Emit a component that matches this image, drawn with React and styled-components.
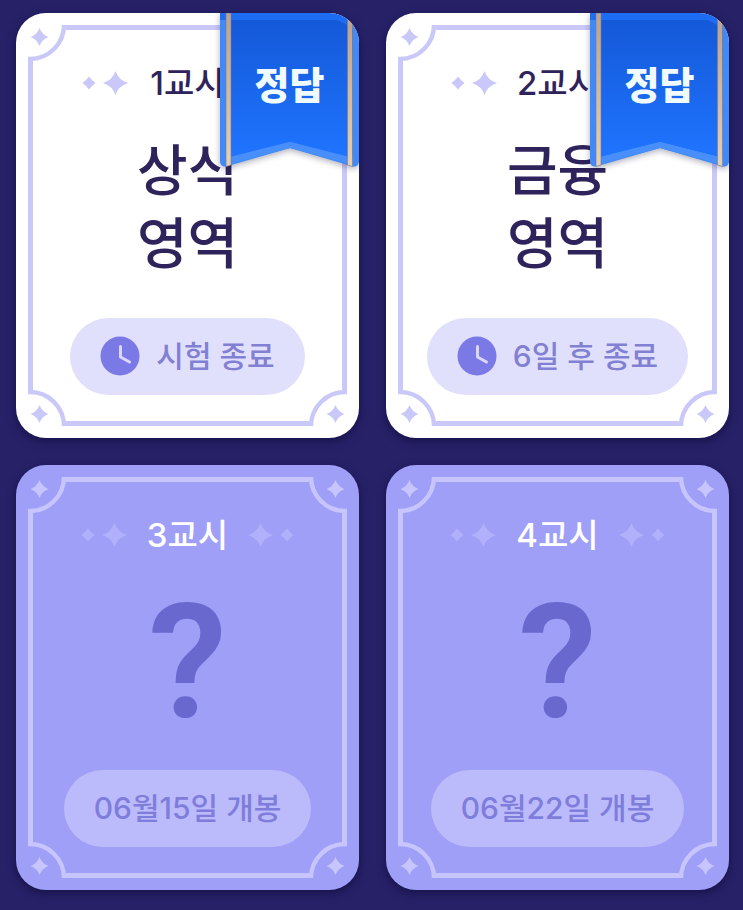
import React from "react";
import styled, { createGlobalStyle, css } from "styled-components";

const GlobalStyle = createGlobalStyle`
  *, *::before, *::after { box-sizing: border-box; }
  body {
    margin: 0;
    background: #272168;
    font-family: Inter, "Noto Sans CJK KR", sans-serif;
  }
`;

const themes = {
  open: {
    background: "#ffffff",
    frame: "#cac8f8",
    sparkle: "#cac8fb",
    period: "#2f235c",
    pill: "#e1e0fc",
    pillText: "#8180d3",
  },
  locked: {
    background: "#9f9ff7",
    frame: "#c6c5fe",
    sparkle: "#b1b0fa",
    period: "#ffffff",
    pill: "#bbbafb",
    pillText: "#7f7ddb",
  },
};

const Board = styled.ul`
  list-style: none;
  margin: 0;
  padding: 13px 14px 20px 16px;
  display: grid;
  grid-template-columns: repeat(2, minmax(0, 1fr));
  gap: 27px;
`;

const Card = styled.li`
  position: relative;
  overflow: hidden;
  display: flex;
  flex-direction: column;
  align-items: center;
  padding: 49px 12px 43px;
  border-radius: 30px;
  background: ${({ $tone }) => themes[$tone].background};
  box-shadow: 0 3px 8px rgba(12, 8, 50, 0.6);
`;

const FrameGrid = styled.div`
  position: absolute;
  inset: 12px;
  display: grid;
  grid-template-columns: 38px 1fr 38px;
  grid-template-rows: 36px 1fr 36px;
  color: ${({ $tone }) => themes[$tone].frame};
  pointer-events: none;
`;

const FrameEdge = styled.span`
  ${({ $side }) => css`border-${$side}: 5px solid currentColor;`}
`;

const flips = {
  topLeft: "none",
  topRight: "scaleX(-1)",
  bottomLeft: "scaleY(-1)",
  bottomRight: "scale(-1, -1)",
};

const CornerSvg = styled.svg`
  display: block;
  width: 38px;
  height: 36px;
  overflow: visible;
  transform: ${({ $place }) => flips[$place]};
`;

const Header = styled.header`
  display: flex;
  align-items: center;
  justify-content: center;
  gap: 20px;
`;

const Period = styled.h2`
  margin: 0;
  min-width: 80px;
  text-align: center;
  font-size: 33px;
  line-height: 42px;
  font-weight: 500;
  white-space: nowrap;
  color: ${({ $tone }) => themes[$tone].period};
`;

const SparkleSvg = styled.svg`
  display: block;
  width: 46px;
  height: 26px;
  fill: ${({ $tone }) => themes[$tone].sparkle};
  transform: ${({ $mirrored }) => ($mirrored ? "scaleX(-1)" : "none")};
`;

const Subject = styled.p`
  margin: 30px 0 38px;
  text-align: center;
  white-space: pre-line;
  font-size: 55px;
  line-height: 73px;
  font-weight: 500;
  color: #2f235c;
`;

const Unknown = styled.p`
  margin: 34px 0;
  font-family: Roboto, sans-serif;
  font-size: 160px;
  line-height: 146px;
  font-weight: 600;
  color: #6968cf;
`;

const Pill = styled.div`
  display: flex;
  align-items: center;
  gap: 16px;
  height: 77px;
  padding: 0 30px 2px;
  border-radius: 39px;
  font-size: 30px;
  line-height: 40px;
  font-weight: 500;
  white-space: nowrap;
  background: ${({ $tone }) => themes[$tone].pill};
  color: ${({ $tone }) => themes[$tone].pillText};
`;

const ClockSvg = styled.svg`
  display: block;
  flex: none;
  width: 40px;
  height: 40px;
`;

const RibbonButton = styled.button`
  position: absolute;
  top: 0;
  right: 0;
  width: 139px;
  height: 155px;
  padding: 0 0 16px;
  border: 0;
  background: none;
  color: #f0fbff;
  font: 900 38px/40px "Noto Sans CJK KR", sans-serif;
  cursor: pointer;
`;

const RibbonSvg = styled.svg`
  position: absolute;
  inset: 0;
  width: 100%;
  height: 100%;
  overflow: visible;
  filter: drop-shadow(0 2px 3px rgba(20, 20, 60, 0.35));
`;

const RibbonLabel = styled.span`
  position: relative;
`;

function Corner({ place }) {
  return (
    <CornerSvg $place={place} viewBox="0 0 38 36" aria-hidden="true">
      <path d="M0 34H2A34 34 0 0 0 36 0" fill="none" stroke="currentColor" strokeWidth="4.4" />
      <path d="M11.500 3Q14 9.500 20.500 12Q14 14.500 11.500 21Q9 14.500 2.500 12Q9 9.500 11.500 3Z" fill="currentColor" />
    </CornerSvg>
  );
}

function Frame({ tone }) {
  return (
    <FrameGrid $tone={tone} aria-hidden="true">
      <Corner place="topLeft" />
      <FrameEdge $side="top" />
      <Corner place="topRight" />
      <FrameEdge $side="left" />
      <span />
      <FrameEdge $side="right" />
      <Corner place="bottomLeft" />
      <FrameEdge $side="bottom" />
      <Corner place="bottomRight" />
    </FrameGrid>
  );
}

function Sparkles({ tone, mirrored }) {
  return (
    <SparkleSvg $tone={tone} $mirrored={mirrored} viewBox="0 0 46 26" aria-hidden="true">
      <path d="M7 6.500Q9.800 10.200 13.500 13Q9.800 15.800 7 19.500Q4.200 15.800 .5 13Q4.200 10.200 7 6.500Z" />
      <path d="M33.500 1Q36.500 10 46 13Q36.500 16 33.500 25Q30.500 16 21 13Q30.500 10 33.500 1Z" />
    </SparkleSvg>
  );
}

function Clock() {
  return (
    <ClockSvg viewBox="0 0 40 40" aria-hidden="true">
      <circle cx="20" cy="20" r="19.500" fill="#7b79e5" />
      <path d="M20.500 10.500V21L29.500 26" fill="none" stroke="#d9d8fb" strokeWidth="3" strokeLinecap="round" strokeLinejoin="round" />
    </ClockSvg>
  );
}

function Ribbon({ id }) {
  const fill = `ribbon-fill-${id}`;
  const gold = `ribbon-gold-${id}`;
  return (
    <RibbonButton type="button">
      <RibbonSvg viewBox="0 0 139 155" preserveAspectRatio="none" aria-hidden="true">
        <defs>
          <linearGradient id={fill} x1="0" y1="0" x2="0" y2="1">
            <stop offset="0" stopColor="#1459d8" />
            <stop offset="1" stopColor="#1f74ff" />
          </linearGradient>
          <linearGradient id={gold} x1="0" y1="0" x2="0" y2="1">
            <stop offset="0" stopColor="#baa294" />
            <stop offset="1" stopColor="#e5d0b5" />
          </linearGradient>
        </defs>
        <path d="M0 0H139V149Q138 154 133 153.500L128 152L70 135L11 152L6 153.500Q1 154 0 149Z" fill="#3f89f8" />
        <path d="M0 0H109Q126 0 133 12L128 18L116 7H0Z" fill="#1d6cf4" />
        <path d="M6 7H117Q124 9 133 17V145L70 129L6 145Z" fill={`url(#${fill})`} />
        <path d="M6 145L70 129L133 145V152L70 135L6 152Z" fill="#488ffb" />
        <path d="M6 0H11V152L6 153.500Z" fill={`url(#${gold})`} stroke="#79788f" strokeWidth=".6" />
        <path d="M127.500 5L132.500 9V153.500L127.500 152Z" fill={`url(#${gold})`} stroke="#79788f" strokeWidth=".6" />
      </RibbonSvg>
      <RibbonLabel>정답</RibbonLabel>
    </RibbonButton>
  );
}

function ExamCard({ id, period, subject, status }) {
  const tone = subject ? "open" : "locked";
  return (
    <Card $tone={tone}>
      <Frame tone={tone} />
      <Header>
        <Sparkles tone={tone} />
        <Period $tone={tone}>{period}</Period>
        <Sparkles tone={tone} mirrored />
      </Header>
      {subject ? <Subject>{subject}</Subject> : <Unknown>?</Unknown>}
      <Pill $tone={tone}>
        {subject && <Clock />}
        <span>{status}</span>
      </Pill>
      {subject && <Ribbon id={id} />}
    </Card>
  );
}

const exams = [
  { id: 1, period: "1교시", subject: "상식\n영역", status: "시험 종료" },
  { id: 2, period: "2교시", subject: "금융\n영역", status: "6일 후 종료" },
  { id: 3, period: "3교시", status: "06월15일 개봉" },
  { id: 4, period: "4교시", status: "06월22일 개봉" },
];

export default function App() {
  return (
    <>
      <GlobalStyle />
      <main>
        <Board>
          {exams.map((exam) => (
            <ExamCard key={exam.id} {...exam} />
          ))}
        </Board>
      </main>
    </>
  );
}
